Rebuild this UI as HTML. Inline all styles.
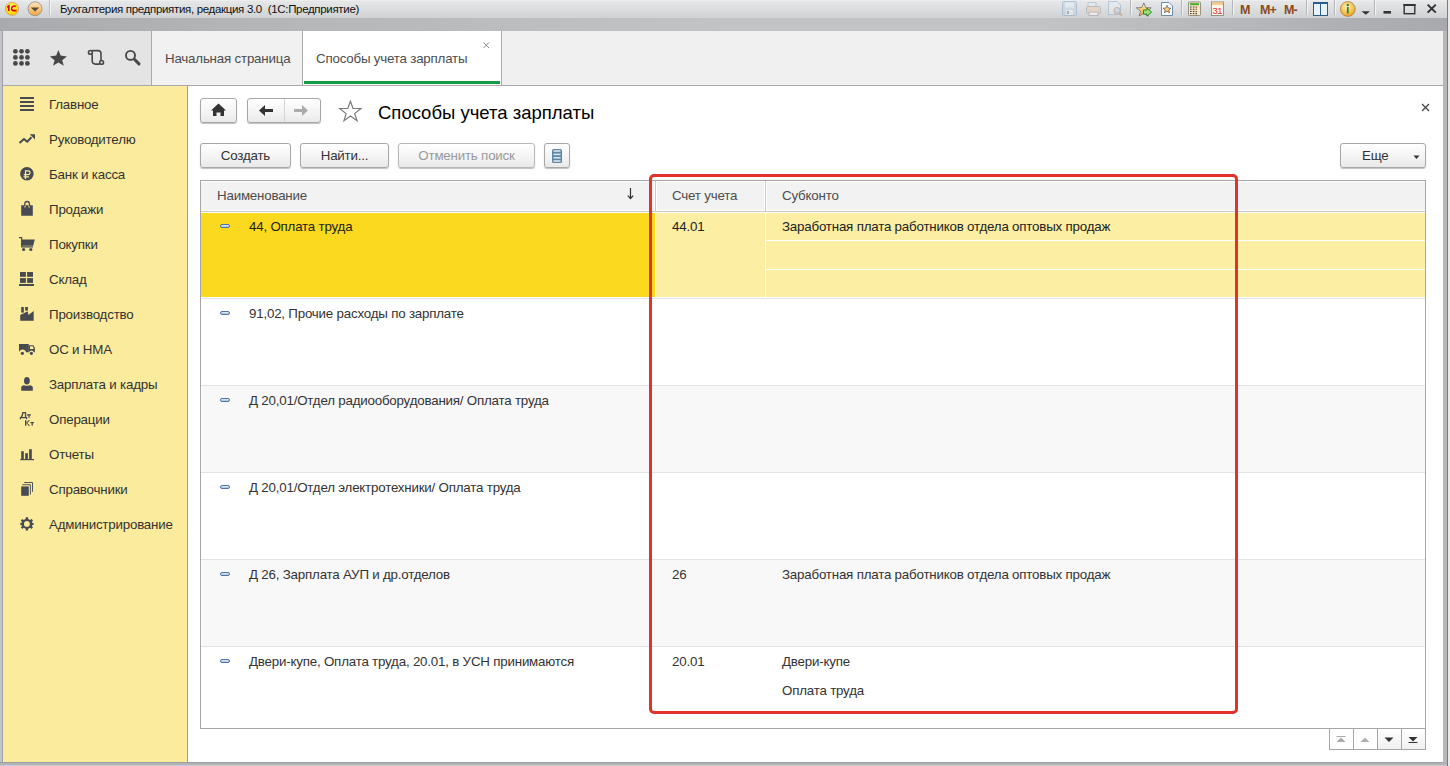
<!DOCTYPE html>
<html><head><meta charset="utf-8">
<style>
*{margin:0;padding:0;box-sizing:border-box}
html,body{width:1450px;height:766px;overflow:hidden}
body{position:relative;background:#b9babd;font-family:"Liberation Sans",sans-serif;font-size:13.33px;letter-spacing:-0.2px;color:#333}
.abs{position:absolute}
#titlebar{left:0;top:0;width:1447px;height:18px;background:linear-gradient(#f2f2f2 0,#e6e7e8 1px,#d1d2d3 100%);}
#band{left:0;top:18px;width:1447px;height:13px;background:linear-gradient(to right,#a8aaad 0%,#b3b4b6 15%,#c2c3c5 50%,#c2c3c5 72%,#b4b5b8 88%,#a8a9ad 100%);}
#panel{left:3px;top:31px;width:1440px;height:55px;background:#f0f0f0;border-bottom:1px solid #a9a9a9}
#iconarea{left:0;top:0;width:149px;height:54px;background:#e4e4e4;border-right:1px solid #a9a9a9}
#tab1{left:149px;top:0;width:151px;height:54px;background:#f1f1f1;border-right:1px solid #a9a9a9}
#tab2{left:300px;top:0;width:199px;height:54px;background:#fff;border-right:1px solid #a9a9a9}
#sidebar{left:3px;top:86px;width:185px;height:676px;background:#fbeb9c;border-right:1px solid #bca21f}
#content{left:188px;top:86px;width:1255px;height:676px;background:#fff}
.side{position:absolute;left:46px;color:#333;white-space:nowrap;line-height:16px}
.btn{position:absolute;height:25px;border:1px solid #a8a8a8;border-radius:3px;background:linear-gradient(#ffffff,#f3f3f3 60%,#e9e9e9);box-shadow:0 1px 1px rgba(0,0,0,.25);color:#333;text-align:center;line-height:23px;white-space:nowrap}
.pill{width:10px;height:4px;border-radius:2px;border:1px solid #5075aa;background:linear-gradient(#e8f0f8,#a8c0da)}
.txt{position:absolute;white-space:nowrap;line-height:16px}
</style></head><body>
<div id="titlebar" class="abs">
  <div class="abs" style="left:60px;top:2px;font-size:11.5px;letter-spacing:-0.32px;color:#111;line-height:14px">Бухгалтерия предприятия, редакция 3.0&nbsp; (1С:Предприятие)</div>
  <svg class="abs" style="left:0;top:0" width="60" height="18" viewBox="0 0 60 18">
   <defs>
    <radialGradient id="g1c" cx="0.45" cy="0.35" r="0.7"><stop offset="0" stop-color="#fff7a8"/><stop offset="0.6" stop-color="#ffe000"/><stop offset="1" stop-color="#f2c200"/></radialGradient>
    <linearGradient id="gdd" x1="0" y1="0" x2="0" y2="1"><stop offset="0" stop-color="#fde7c0"/><stop offset="1" stop-color="#f2a640"/></linearGradient>
   </defs>
   <circle cx="12" cy="8.8" r="6.6" fill="url(#g1c)" stroke="#c9a080" stroke-width="0.8"/>
   <path d="M7.2 7.4 L8.8 6 L8.8 11" stroke="#e00000" stroke-width="1.6" fill="none"/>
   <path d="M15.8 6.6 Q14.6 5.6 13 6.4 Q11.3 7.3 11.6 9 Q12 10.6 13.6 10.6 L16.6 10.6" stroke="#e00000" stroke-width="1.6" fill="none"/>
   <circle cx="35" cy="8.8" r="7" fill="url(#gdd)" stroke="#8a8a8a" stroke-width="0.8"/>
   <path d="M30.8 7.6 L39.2 7.6 L35 11.6 Z" fill="#5a4a30"/>
   <rect x="49" y="0" width="1" height="15" fill="#b8babd"/>
   <rect x="50" y="0" width="1" height="15" fill="#f4f5f6"/>
  </svg>
  <svg class="abs" style="left:1050px;top:0" width="400" height="18" viewBox="1050 0 400 18">
   <defs>
    <linearGradient id="gstar" x1="0" y1="0" x2="0" y2="1"><stop offset="0" stop-color="#ffe9b0"/><stop offset="1" stop-color="#f0b040"/></linearGradient>
    <radialGradient id="ginfo" cx="0.45" cy="0.35" r="0.7"><stop offset="0" stop-color="#fff0c0"/><stop offset="0.7" stop-color="#f5b840"/><stop offset="1" stop-color="#e09020"/></radialGradient>
   </defs>
   <!-- save (disabled) -->
   <g opacity="0.55">
    <rect x="1062.5" y="1.5" width="14" height="14" rx="1" fill="#bcd4e8" stroke="#86aacb"/>
    <rect x="1065" y="2.5" width="9" height="5" fill="#e8f0f6"/>
    <rect x="1066" y="10" width="7" height="5" fill="#f0f0f0"/>
    <rect x="1067" y="11" width="2" height="3" fill="#6a90b0"/>
   </g>
   <!-- print disabled -->
   <g opacity="0.5">
    <rect x="1088" y="2.5" width="8" height="5" fill="#e6eef4" stroke="#9ab4cc"/>
    <rect x="1086.5" y="6.5" width="14" height="7" rx="1" fill="#e8cdb0" stroke="#9a9a9a"/>
    <rect x="1089" y="12" width="9" height="3.5" fill="#fff" stroke="#999"/>
   </g>
   <!-- preview disabled -->
   <g opacity="0.5">
    <path d="M1108.5 1.5 H1117 L1120.5 5 V14.5 H1108.5 Z" fill="#e6eef4" stroke="#86aacb"/>
    <circle cx="1117" cy="10.5" r="3" fill="#b8d0e8" stroke="#b89070" stroke-width="1.2"/>
    <path d="M1119 12.5 L1122 15.5" stroke="#b89070" stroke-width="1.8"/>
   </g>
   <rect x="1130" y="0" width="1" height="15" fill="#b3b5b8"/><rect x="1131" y="0" width="1" height="15" fill="#f2f3f4"/>
   <!-- star + arrow -->
   <path d="M1143.8 2.8 L1145.8 7.6 L1151.2 7.8 L1147 11.2 L1148.4 16 L1143.8 13.3 L1139.2 16 L1140.6 11.2 L1136.4 7.8 L1141.8 7.6 Z" fill="url(#gstar)" stroke="#6e6e6e" stroke-width="0.8"/>
   <path d="M1143.5 10 H1147 V8 L1151.6 12.2 L1147 16.2 V14.2 H1143.5 Z" fill="#98e078" stroke="#1f7a1f" stroke-width="0.9"/>
   <!-- doc star -->
   <path d="M1161.5 2.5 H1169 L1172.5 6 V15.5 H1161.5 Z" fill="#fafcff" stroke="#5a82aa" stroke-width="0.9"/>
   <path d="M1167 5.2 L1168.2 8 L1171 8.2 L1168.9 10 L1169.6 12.8 L1167 11.3 L1164.4 12.8 L1165.1 10 L1163 8.2 L1165.8 8 Z" fill="url(#gstar)" stroke="#555" stroke-width="0.7"/>
   <rect x="1181" y="0" width="1" height="15" fill="#b3b5b8"/><rect x="1182" y="0" width="1" height="15" fill="#f2f3f4"/>
   <!-- calculator -->
   <rect x="1188.5" y="2" width="12" height="13.5" rx="0.8" fill="#fbe6c4" stroke="#8a8a7a" stroke-width="0.9"/>
   <rect x="1190" y="3.2" width="9" height="2" fill="#3fae2a"/>
   <g fill="#333">
    <rect x="1190" y="6.5" width="1.6" height="1"/><rect x="1192.8" y="6.5" width="1.6" height="1"/><rect x="1195.6" y="6.5" width="1.2" height="1.4" fill="#e02020"/>
    <rect x="1190" y="8.7" width="1.6" height="1"/><rect x="1192.8" y="8.7" width="1.6" height="1"/><rect x="1195.6" y="8.7" width="1.2" height="1"/>
    <rect x="1190" y="10.9" width="1.6" height="1"/><rect x="1192.8" y="10.9" width="1.6" height="1"/><rect x="1195.6" y="10.9" width="1.2" height="1"/>
    <rect x="1190" y="13.1" width="1.6" height="1"/><rect x="1192.8" y="13.1" width="1.6" height="1"/><rect x="1195.6" y="12.8" width="1.2" height="1.6"/>
   </g>
   <!-- calendar -->
   <rect x="1211.5" y="2" width="12" height="13.5" fill="#fff6ea" stroke="#8a8a7a" stroke-width="0.9"/>
   <rect x="1212" y="2.4" width="11" height="2.4" fill="#f4c880"/>
   <text x="1212.4" y="14.2" font-family="Liberation Sans" font-size="9.5" fill="#e83020" letter-spacing="-0.4">31</text>
   <rect x="1232" y="0" width="1" height="15" fill="#b3b5b8"/><rect x="1233" y="0" width="1" height="15" fill="#f2f3f4"/>
   <!-- M M+ M- -->
   <text x="1240" y="14" font-family="Liberation Sans" font-weight="bold" font-size="12.5" fill="#8b4a1e" letter-spacing="-0.5">M</text>
   <text x="1260" y="14" font-family="Liberation Sans" font-weight="bold" font-size="12.5" fill="#8b4a1e" letter-spacing="-0.8">M+</text>
   <text x="1284" y="14" font-family="Liberation Sans" font-weight="bold" font-size="12.5" fill="#8b4a1e" letter-spacing="-0.8">M-</text>
   <rect x="1306" y="0" width="1" height="15" fill="#b3b5b8"/><rect x="1307" y="0" width="1" height="15" fill="#f2f3f4"/>
   <!-- panel -->
   <rect x="1313.5" y="2.5" width="14" height="13" fill="#e8f2fb" stroke="#2a5a92" stroke-width="1"/>
   <rect x="1313.5" y="2.5" width="14" height="1.5" fill="#2a5a92"/>
   <rect x="1320" y="3" width="1" height="12" fill="#2a5a92"/>
   <rect x="1334" y="0" width="1" height="15" fill="#b3b5b8"/><rect x="1335" y="0" width="1" height="15" fill="#f2f3f4"/>
   <!-- info -->
   <circle cx="1347.8" cy="9" r="7.4" fill="url(#ginfo)" stroke="#a07838" stroke-width="0.7"/>
   <circle cx="1347.8" cy="5" r="1.2" fill="#2a8a20"/>
   <rect x="1346.9" y="7" width="1.8" height="6.5" fill="#2a8a20"/>
   <path d="M1361.5 11.2 H1370 L1365.8 14.8 Z" fill="#333"/>
   <rect x="1374" y="0" width="1" height="15" fill="#b3b5b8"/><rect x="1375" y="0" width="1" height="15" fill="#f2f3f4"/>
   <!-- min max close -->
   <rect x="1383.5" y="11" width="7.5" height="2.6" fill="#333"/>
   <rect x="1404.2" y="4.7" width="10.6" height="9" fill="none" stroke="#333" stroke-width="1.4"/>
   <rect x="1403.5" y="4" width="12" height="2" fill="#333"/>
   <path d="M1427.6 4.6 L1435.8 12.6 M1435.8 4.6 L1427.6 12.6" stroke="#333" stroke-width="2"/>
  </svg>
</div>
<div id="band" class="abs"></div>
<div class="abs" style="left:0;top:31px;width:2px;height:735px;background:#c4c5c7"></div>
<div class="abs" style="left:2px;top:31px;width:1px;height:732px;background:#9fa0a6"></div>
<div class="abs" style="left:0;top:762px;width:1447px;height:1px;background:#9c9da2"></div>
<div class="abs" style="left:0;top:763px;width:1447px;height:2px;background:#b3b4b7"></div>
<div class="abs" style="left:0;top:765px;width:1447px;height:1px;background:#c9cacc"></div>
<div class="abs" style="left:1443px;top:31px;width:4px;height:732px;background:#b6b7b9"></div>
<div class="abs" style="left:1447px;top:0;width:1px;height:766px;background:#7c7c7c"></div>
<div class="abs" style="left:1448px;top:0;width:2px;height:766px;background:#e9e9e9"></div>

<div id="panel" class="abs">
  <div id="iconarea" class="abs"></div>
  <div id="tab1" class="abs"><div class="txt" style="left:13px;top:20px;color:#4d4d4d">Начальная страница</div></div>
  <div id="tab2" class="abs"><div class="txt" style="left:13px;top:20px;color:#4d4d4d">Способы учета зарплаты</div>
    <div class="abs" style="left:1px;top:50px;width:196px;height:3px;background:#129c45"></div>
    <svg class="abs" style="left:180px;top:11px" width="7" height="7" viewBox="0 0 7 7"><path d="M0.5 0.5 L6 6 M6 0.5 L0.5 6" stroke="#8a8a8a" stroke-width="1"/></svg></div>
</div>

<svg class="abs" style="left:0;top:31px" width="150" height="54" viewBox="0 31 150 54">
 <g fill="#484848">
  <circle cx="15.4" cy="51.3" r="2.4"/><circle cx="21.5" cy="51.3" r="2.4"/><circle cx="27.4" cy="51.3" r="2.4"/>
  <circle cx="15.4" cy="57.4" r="2.4"/><circle cx="21.5" cy="57.4" r="2.4"/><circle cx="27.4" cy="57.4" r="2.4"/>
  <circle cx="15.4" cy="63.4" r="2.4"/><circle cx="21.5" cy="63.4" r="2.4"/><circle cx="27.4" cy="63.4" r="2.4"/>
  <path d="M58.4 50 L60.6 55.6 L66.9 56.4 L62.2 60.3 L63.8 65.8 L58.4 62.6 L53 65.8 L54.6 60.3 L49.9 56.4 L56.2 55.6 Z"/>
 </g>
 <g fill="none" stroke="#484848" stroke-width="1.6">
  <path d="M92 50.6 H98 Q101 50.6 101 53.6 V60.5"/>
  <path d="M92.2 54.3 V60.8 Q92.2 64.1 95.5 64.1 H99.7"/>
  <circle cx="90.4" cy="52.4" r="1.9"/>
  <circle cx="101.6" cy="62.4" r="1.9"/>
  <circle cx="130.5" cy="55.4" r="4.5" stroke-width="1.9"/>
 </g>
 <path d="M134.6 59.5 L139 63.9" stroke="#484848" stroke-width="3" stroke-linecap="round"/>
</svg>
<div id="sidebar" class="abs">
  <div class="side" style="top:11px">Главное</div>
  <div class="side" style="top:46px">Руководителю</div>
  <div class="side" style="top:81px">Банк и касса</div>
  <div class="side" style="top:116px">Продажи</div>
  <div class="side" style="top:151px">Покупки</div>
  <div class="side" style="top:186px">Склад</div>
  <div class="side" style="top:221px">Производство</div>
  <div class="side" style="top:256px">ОС и НМА</div>
  <div class="side" style="top:291px">Зарплата и кадры</div>
  <div class="side" style="top:326px">Операции</div>
  <div class="side" style="top:361px">Отчеты</div>
  <div class="side" style="top:396px">Справочники</div>
  <div class="side" style="top:431px">Администрирование</div>
</div>
<div id="content" class="abs"></div>

<svg class="abs" style="left:0;top:86px" width="45" height="460" viewBox="0 86 45 460">
 <g fill="#484a52">
  <rect x="20" y="97" width="14" height="2"/><rect x="20" y="101" width="14" height="2"/><rect x="20" y="105" width="14" height="2"/><rect x="20" y="109" width="14" height="2"/>
  <path d="M19.5 143 L24 139 L27.2 141.7 L31.5 137.3" fill="none" stroke="#484a52" stroke-width="2"/>
  <path d="M29.8 134.2 L35 134.2 L35 139.4 Z"/>
  <circle cx="26.9" cy="173.8" r="6.8"/>
  <path d="M25.5 179 V170.9 H28.2 A1.85 1.85 0 0 1 28.2 174.6 H23.8 M23.6 176.8 H29" fill="none" stroke="#fbeb9c" stroke-width="1.2"/>
  <path d="M21.2 205.2 H24.2 V207 Q25 208.2 25.6 207 V205.2 H28.4 V207 Q29.2 208.2 30 207 V205.2 H32.8 V215.8 H21.2 Z"/>
  <path d="M24.8 206.6 V203.8 A2.3 2.3 0 0 1 29.4 203.8 V206.6" fill="none" stroke="#484a52" stroke-width="1.3"/>
  <path d="M19 237.7 H21.7 V246.8 H33" fill="none" stroke="#484a52" stroke-width="1.2"/>
  <path d="M21.2 239.4 H34.8 L33.2 245.7 H21.2 Z"/>
  <circle cx="23.6" cy="249.5" r="1.6"/><circle cx="30.8" cy="249.5" r="1.6"/>
  <rect x="20" y="272" width="5.9" height="4.8"/><rect x="27.1" y="272" width="5.9" height="4.8"/>
  <rect x="20" y="278.1" width="5.9" height="4.8"/><rect x="27.1" y="278.1" width="5.9" height="4.8"/>
  <rect x="19" y="284" width="15" height="2"/>
  <rect x="21.2" y="307" width="2.6" height="5.6"/><rect x="25.1" y="307" width="2.8" height="3.6"/>
  <path d="M20.2 315 L27.8 311.2 L28.4 315 L33.7 311 V320.8 H20.2 Z"/>
  <path d="M19 344 H28.8 V352.2 H26 A3.6 3.6 0 0 0 19 352.2 Z"/>
  <path d="M28.8 345.2 H33.4 L34.9 348 V352.3 H33.9 A2.6 2.6 0 0 0 29 352.3 H28.8 Z"/>
  <path d="M30 346.3 H32.8 L33.8 349.1 H30 Z" fill="#fbeb9c"/>
  <circle cx="22.4" cy="353.3" r="1.6"/><circle cx="31.4" cy="353.3" r="1.6"/>
  <ellipse cx="26.9" cy="380.8" rx="2.9" ry="3.8"/>
  <path d="M21.2 390.8 V387.6 Q21.2 385.6 24.2 385.2 Q26.9 386.4 29.6 385.2 Q32.8 385.6 32.8 387.6 V390.8 Z"/>
  <path d="M22.3 412 H26.2 V417 H27.2 V419.2 H26 V418.2 H21 V419.2 H19.8 V417 H20.6 Q21.9 415.4 22.3 412 Z M23.4 413.3 Q23.2 415.6 22.3 417 H24.9 V413.3 Z" fill-rule="evenodd"/>
  <rect x="27" y="414.3" width="4" height="1.2"/><rect x="28.4" y="414.3" width="1.2" height="3.5"/>
  <rect x="25" y="420.3" width="1.4" height="5.4"/>
  <path d="M26.2 422.7 L28.6 420.3 H30 L27.3 423 L30.2 425.7 H28.7 Z"/>
  <rect x="30.4" y="422" width="3.6" height="1.2"/><rect x="31.6" y="422" width="1.2" height="3.7"/>
  <rect x="21.2" y="451.2" width="2.6" height="8"/><rect x="25.2" y="453.2" width="2.7" height="6"/><rect x="29.1" y="449.2" width="2.7" height="10"/>
  <rect x="20.2" y="459" width="13.8" height="1.2"/>
  <rect x="21.2" y="486.4" width="7.6" height="9.4"/>
  <path d="M22.4 484.7 H30.4 V494.6 M24.2 482.5 H32.5 V491.8" fill="none" stroke="#484a52" stroke-width="0.95"/>
  <g transform="translate(26.9 523.9)">
   <path d="M-1.1 -6.6 H1.1 L1.3 -4.8 L3.2 -3.9 L4.6 -5.0 L5.0 -4.6 L6.1 -3.4 L4.9 -2.0 L5.5 -1.0 L6.6 -1.1 V1.1 L5.5 1.0 L4.9 2.0 L6.1 3.4 L4.6 5.0 L3.2 3.9 L1.3 4.8 L1.1 6.6 H-1.1 L-1.3 4.8 L-3.2 3.9 L-4.6 5.0 L-6.1 3.4 L-4.9 2.0 L-5.5 1.0 L-6.6 1.1 V-1.1 L-5.5 -1.0 L-4.9 -2.0 L-6.1 -3.4 L-4.6 -5.0 L-3.2 -3.9 L-1.3 -4.8 Z"/>
   <circle r="2.9" fill="#fbeb9c"/>
  </g>
 </g>
</svg>


<!-- nav buttons -->
<div class="btn" style="left:200px;top:98px;width:37px;height:25px"></div>
<svg class="abs" style="left:211px;top:103px" width="16" height="14" viewBox="0 0 16 14"><path d="M7.5 0.5 L15 7.5 L13 7.5 L13 13 L9.5 13 L9.5 9.5 L5.5 9.5 L5.5 13 L2 13 L2 7.5 L0 7.5 Z" fill="#333"/></svg>
<div class="btn" style="left:247px;top:98px;width:74px;height:25px"></div>
<div class="abs" style="left:284px;top:99px;width:1px;height:23px;background:#d4d4d4"></div>
<svg class="abs" style="left:259px;top:105px" width="15" height="12" viewBox="0 0 15 12"><path d="M0 5.5 L6 0 L6 4 L14 4 L14 7 L6 7 L6 11 Z" fill="#333"/></svg>
<svg class="abs" style="left:294px;top:105px" width="15" height="12" viewBox="0 0 15 12"><path d="M14 5.5 L8 0 L8 4 L0 4 L0 7 L8 7 L8 11 Z" fill="#aaa"/></svg>
<svg class="abs" style="left:338px;top:100px" width="25" height="23" viewBox="0 0 25 23"><path d="M12.4 1.2 L15 8.5 L23 8.5 L16.6 13.6 L19.1 20.7 L12.4 16 L6 20.7 L8.1 13.6 L1.7 8.5 L9.9 8.5 Z" fill="none" stroke="#7a7a7a" stroke-width="1.2" stroke-linejoin="miter"/></svg>
<div class="txt" style="left:378px;top:102px;font-size:18.5px;line-height:22px;color:#000;letter-spacing:0">Способы учета зарплаты</div>
<svg class="abs" style="left:1421px;top:103px" width="9" height="9" viewBox="0 0 9 9"><path d="M1 1 L8 8 M8 1 L1 8" stroke="#444" stroke-width="1.3"/></svg>

<!-- command bar -->
<div class="btn" style="left:200px;top:143px;width:91px">Создать</div>
<div class="btn" style="left:300px;top:143px;width:89px">Найти...</div>
<div class="btn" style="left:398px;top:143px;width:137px;color:#9a9a9a;border-color:#b8b8b8">Отменить поиск</div>
<div class="btn" style="left:544px;top:143px;width:26px"></div>
<svg class="abs" style="left:552px;top:149px" width="10" height="14" viewBox="0 0 10 14">
 <rect x="0" y="0" width="10" height="14" rx="1.5" fill="#5f87a5"/>
 <rect x="1.5" y="1.2" width="7" height="1.6" fill="#d6e6f2"/>
 <rect x="1.5" y="4.6" width="7" height="1.6" fill="#d6e6f2"/>
 <rect x="1.5" y="8" width="7" height="1.6" fill="#d6e6f2"/>
 <rect x="1.5" y="11.2" width="7" height="1.6" fill="#d6e6f2"/>
</svg>
<div class="btn" style="left:1340px;top:143px;width:86px;text-align:left;padding-left:21px">Еще</div>
<svg class="abs" style="left:1413px;top:155px" width="7" height="5" viewBox="0 0 7 5"><path d="M0.5 0.5 L6.5 0.5 L3.5 4 Z" fill="#333"/></svg>

<!-- table -->
<div class="abs" style="left:200px;top:180px;width:1226px;height:549px;border:1px solid #a6a6a6;background:#fff"></div>
<div class="abs" style="left:201px;top:182px;width:1224px;height:28px;background:#f2f2f2"></div>
<div class="abs" style="left:201px;top:210px;width:1224px;height:1px;background:#fff"></div>
<div class="abs" style="left:201px;top:211px;width:1224px;height:1px;background:#c9c9c9"></div>
<div class="abs" style="left:654px;top:181px;width:1px;height:30px;background:#fff"></div>
<div class="abs" style="left:655px;top:181px;width:1px;height:31px;background:#c9c9c9"></div>
<div class="abs" style="left:656px;top:181px;width:1px;height:30px;background:#fff"></div>
<div class="abs" style="left:764px;top:181px;width:1px;height:30px;background:#fff"></div>
<div class="abs" style="left:765px;top:181px;width:1px;height:31px;background:#c9c9c9"></div>
<div class="abs" style="left:766px;top:181px;width:1px;height:30px;background:#fff"></div>
<div class="txt" style="left:217px;top:188px;color:#4d4d4d">Наименование</div>
<div class="txt" style="left:672px;top:188px;color:#4d4d4d">Счет учета</div>
<div class="txt" style="left:782px;top:188px;color:#4d4d4d">Субконто</div>
<svg class="abs" style="left:626px;top:188px" width="9" height="12" viewBox="0 0 9 12"><path d="M4.5 0 L4.5 10 M1.8 7.6 L4.5 10.5 L7.2 7.6" stroke="#333" stroke-width="1.2" fill="none"/></svg>

<!-- row1 selected -->
<div class="abs" style="left:201px;top:213px;width:454px;height:84px;background:#fbd91f"></div>
<div class="abs" style="left:656px;top:213px;width:109px;height:84px;background:#fcefa4"></div>
<div class="abs" style="left:766px;top:213px;width:659px;height:84px;background:#fcefa4"></div>
<div class="abs" style="left:766px;top:240px;width:659px;height:1px;background:#fff"></div>
<div class="abs" style="left:766px;top:269px;width:659px;height:1px;background:#fff"></div>
<!-- row backgrounds -->
<div class="abs" style="left:201px;top:298px;width:1224px;height:1px;background:#e3e3e3"></div>
<div class="abs" style="left:202px;top:386px;width:1223px;height:86px;background:#f8f8f8"></div>
<div class="abs" style="left:201px;top:385px;width:1224px;height:1px;background:#e3e3e3"></div>
<div class="abs" style="left:201px;top:472px;width:1224px;height:1px;background:#e3e3e3"></div>
<div class="abs" style="left:202px;top:560px;width:1223px;height:86px;background:#f8f8f8"></div>
<div class="abs" style="left:201px;top:559px;width:1224px;height:1px;background:#e3e3e3"></div>
<div class="abs" style="left:201px;top:646px;width:1224px;height:1px;background:#e3e3e3"></div>
<div class="abs pill" style="left:220px;top:224px"></div>
<div class="txt" style="left:249px;top:219px;color:#222">44, Оплата труда</div>
<div class="txt" style="left:672px;top:219px;color:#222">44.01</div>
<div class="txt" style="left:782px;top:219px;color:#222">Заработная плата работников отдела оптовых продаж</div>
<div class="abs pill" style="left:220px;top:311px"></div>
<div class="txt" style="left:249px;top:306px;color:#333">91,02, Прочие расходы по зарплате</div>
<div class="abs pill" style="left:220px;top:398px"></div>
<div class="txt" style="left:249px;top:393px;color:#333">Д 20,01/Отдел радиооборудования/ Оплата труда</div>
<div class="abs pill" style="left:220px;top:485px"></div>
<div class="txt" style="left:249px;top:480px;color:#333">Д 20,01/Отдел электротехники/ Оплата труда</div>
<div class="abs pill" style="left:220px;top:572px"></div>
<div class="txt" style="left:249px;top:567px;color:#333">Д 26, Зарплата АУП и др.отделов</div>
<div class="txt" style="left:672px;top:567px;color:#333">26</div>
<div class="txt" style="left:782px;top:567px;color:#333">Заработная плата работников отдела оптовых продаж</div>
<div class="abs pill" style="left:220px;top:659px"></div>
<div class="txt" style="left:249px;top:654px;color:#333">Двери-купе, Оплата труда, 20.01, в УСН принимаются</div>
<div class="txt" style="left:672px;top:654px;color:#333">20.01</div>
<div class="txt" style="left:782px;top:654px;color:#333">Двери-купе</div>
<div class="txt" style="left:782px;top:683px;color:#333">Оплата труда</div>

<!-- red rectangle -->
<div class="abs" style="left:649px;top:174px;width:589px;height:540px;border:3px solid #e1332b;border-radius:5px"></div>
<!-- nav buttons bottom -->
<div class="abs" style="left:1329px;top:728px;width:97px;height:22px;border:1px solid #a6a6a6;background:#fff"></div>
<div class="abs" style="left:1377px;top:729px;width:48px;height:20px;background:linear-gradient(#fff,#f0f0f0)"></div>
<div class="abs" style="left:1353px;top:729px;width:1px;height:20px;background:#a6a6a6"></div>
<div class="abs" style="left:1377px;top:729px;width:1px;height:20px;background:#a6a6a6"></div>
<div class="abs" style="left:1401px;top:729px;width:1px;height:20px;background:#a6a6a6"></div>
<svg class="abs" style="left:1336px;top:736px" width="10" height="7" viewBox="0 0 10 7"><rect x="0.5" y="0" width="9" height="1" fill="#aaa"/><path d="M5 1.6 L9.5 6 L0.5 6 Z" fill="#aaa"/></svg>
<svg class="abs" style="left:1360px;top:737px" width="10" height="6" viewBox="0 0 10 6"><path d="M5 0.5 L9.5 5 L0.5 5 Z" fill="#b0b0b0"/></svg>
<svg class="abs" style="left:1384px;top:737px" width="10" height="6" viewBox="0 0 10 6"><path d="M0.5 0.5 L9.5 0.5 L5 5 Z" fill="#333"/></svg>
<svg class="abs" style="left:1408px;top:737px" width="10" height="7" viewBox="0 0 10 7"><path d="M0.5 0 L9.5 0 L5 4.5 Z" fill="#333"/><rect x="0.5" y="5" width="9" height="1" fill="#333"/></svg>

</body></html>
